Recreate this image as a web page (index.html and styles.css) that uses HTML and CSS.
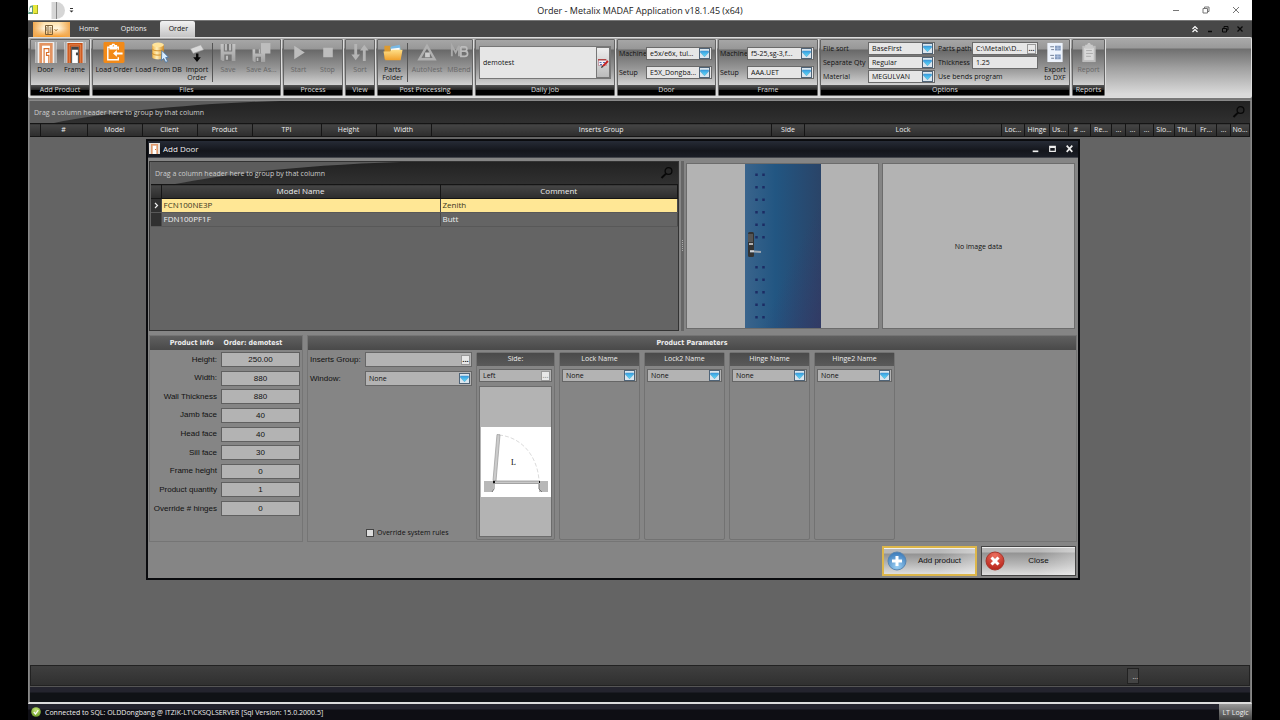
FILE: index.html
```html
<!DOCTYPE html>
<html lang="en">
<head>
<meta charset="utf-8">
<title>Order - Metalix MADAF Application v18.1.45 (x64)</title>
<link rel="stylesheet" href="styles.css">
</head>
<body>
<svg class="defs" aria-hidden="true">
  <defs>
    <linearGradient id="gCyan" x1="0" y1="0" x2="0" y2="1"><stop offset="0" stop-color="#3a9be0"/><stop offset="1" stop-color="#5fe0f8"/></linearGradient>
    <linearGradient id="gGrey" x1="0" y1="0" x2="0" y2="1"><stop offset="0" stop-color="#c4c4c4"/><stop offset="1" stop-color="#a2a2a2"/></linearGradient>
    <linearGradient id="gGold" x1="0" y1="0" x2="1" y2="0"><stop offset="0" stop-color="#f6b94a"/><stop offset=".4" stop-color="#fff0bb"/><stop offset="1" stop-color="#d58b1f"/></linearGradient>
    <linearGradient id="gFolder" x1="0" y1="0" x2="0" y2="1"><stop offset="0" stop-color="#ffe08a"/><stop offset="1" stop-color="#f0a12c"/></linearGradient>
    <linearGradient id="gDoor" x1="0" y1="0" x2="1" y2="0"><stop offset="0" stop-color="#3a648c"/><stop offset=".4" stop-color="#225682"/><stop offset="1" stop-color="#2a4468"/></linearGradient>
    <linearGradient id="gShade" x1="0" y1="0" x2="1" y2="1"><stop offset=".6" stop-color="#3a3468" stop-opacity="0"/><stop offset="1" stop-color="#3a3060" stop-opacity=".5"/></linearGradient>
    <radialGradient id="gBlue" cx=".5" cy=".8" r=".8"><stop offset="0" stop-color="#9cd0f4"/><stop offset="1" stop-color="#3878b8"/></radialGradient>
    <radialGradient id="gRed" cx=".5" cy=".2" r=".9"><stop offset="0" stop-color="#ec7060"/><stop offset="1" stop-color="#b01810"/></radialGradient>
    <radialGradient id="gGreen" cx=".5" cy=".3" r=".7"><stop offset="0" stop-color="#c8e878"/><stop offset="1" stop-color="#6c9c28"/></radialGradient>
    <symbol id="drop" viewBox="0 0 11 11"><rect width="11" height="11" fill="#4f6478"/><rect x="1" y="1" width="9" height="9" fill="#dbe6ee"/><path d="M1.500 3h8v1.600L5.500 8.800 1.500 4.600z" fill="url(#gCyan)" stroke="#3f92c8" stroke-width=".5"/></symbol>
    <symbol id="search" viewBox="0 0 14 14"><circle cx="8.500" cy="5" r="3.400" fill="none" stroke="#080808" stroke-width="1.300"/><path d="M6 7.600 1.500 12" stroke="#080808" stroke-width="2"/></symbol>
    <symbol id="floppy" viewBox="0 0 16 20"><path d="M1 2h14v16H2.500L1 16.500z" fill="url(#gGrey)"/><path d="M4 2h8v7H4zM4.500 12h7v6h-7z" fill="#777"/><path d="M5 2h2v6H5zM9 2h2v6H9zM6 13h2v4H6z" fill="#bdbdbd"/></symbol>
  </defs>
</svg>

<div class="app">
  <header class="titlebar">
    <div class="quick">
      <svg class="logo" viewBox="0 0 11 12"><path d="M2 2 6 1v9L0 10z" fill="#5d9b83"/><path d="M2 4l2-1v5H1z" fill="#fff"/><path d="M5 1h5v9H5z" fill="#e8e83c"/><path d="M9 1h1v9H6v-1h3z" fill="#a0aa28"/></svg>
      <span class="quick-tail"></span>
      <svg class="quick-arrow" viewBox="0 0 5 5"><path d="M1 0h3v1H1zM.5 2.500h4L2.500 4.500z" fill="#333"/></svg>
    </div>
    <h1>Order - Metalix MADAF Application v18.1.45 (x64)</h1>
    <div class="win-buttons">
      <button aria-label="Minimize"><svg viewBox="0 0 8 8"><path d="M1 4.500h6"/></svg></button>
      <button aria-label="Restore"><svg viewBox="0 0 8 8"><path d="M1 2.500h4.500V7H1zM2.500 2.500V1H7v4.500H5.500"/></svg></button>
      <button aria-label="Close"><svg viewBox="0 0 8 8"><path d="m1 1 6 6M7 1 1 7"/></svg></button>
    </div>
  </header>

  <nav class="tabs">
    <button class="app-button" aria-label="Application menu"><svg viewBox="0 0 15 10"><path d="M1.500.5h7v9h-7zM4 .5v9M5.500 3h2M5.500 5h2M5.500 7h2M2 3h1M2 5h1" fill="none" stroke="#7d6138"/><path d="m10.500 4 1.500 2 1.500-2" fill="none" stroke="#b88a4a"/></svg></button>
    <button class="tab">Home</button>
    <button class="tab">Options</button>
    <button class="tab active">Order</button>
    <div class="mdi">
      <svg viewBox="0 0 8 8"><path d="m1.500 4 2.500-2.500L6.500 4M1.500 7 4 4.500 6.500 7" fill="none" stroke="#fff" stroke-width="1.200"/></svg>
      <svg viewBox="0 0 8 8"><path d="M2 6.500h4" stroke="#080808" stroke-width="1.500"/></svg>
      <svg viewBox="0 0 8 8"><path d="M1.500 3.500h4V7h-4zM3 3V1.500h4V5H5.500" fill="none" stroke="#080808"/></svg>
      <svg viewBox="0 0 8 8"><path d="m1.500 1.500 5 5M6.500 1.500l-5 5" stroke="#080808" stroke-width="1.300"/></svg>
    </div>
  </nav>

  <section class="ribbon">
    <div class="group g-add">
      <div class="group-body">
        <button class="tool"><svg viewBox="0 0 22 22"><path d="M0 0h22v22H0z" fill="#eee"/><path d="M1.500 0v22M20.500 0v22" stroke="#777"/><path d="M4 1h14v21h-3V4H7v18H4z" fill="#e39462"/><path d="M7 4h8v18H7z" fill="#fff"/><path d="M9 22V7h5v4h-2.500v3H14v8" fill="none" stroke="#d9702c" stroke-width="1.200"/></svg><span>Door</span></button>
        <button class="tool"><svg viewBox="0 0 22 22"><path d="M0 0h22v22H0z" fill="#eee"/><path d="M1.500 0v22M20.500 0v22" stroke="#777"/><path d="M3 1h16v21h-4V5H7v17H3z" fill="#c95216"/><path d="M5 22V3h12v19" fill="none" stroke="#f0a070" stroke-width=".7"/><path d="M7 5h8v17H7z" fill="#444"/><path d="M8 8h6v3h-2v3h2v8H8z" fill="#fff"/></svg><span>Frame</span></button>
      </div>
      <div class="caption">Add Product</div>
    </div>
    <div class="group g-files">
      <div class="group-body">
        <button class="tool w-order"><svg viewBox="0 0 22 22"><rect width="22" height="22" rx="1.500" fill="#f28a18"/><path d="M15.500 8V5.500h-11v13h11V16M7 5V4h2l.5-1.500h1.500L11.500 4h2v3H7z" fill="none" stroke="#fff" stroke-width="1.500"/><path d="m10 12 4-3.500V11h6v2h-6v2.500z" fill="#fff"/></svg><span>Load Order</span></button>
        <button class="tool w-db"><svg viewBox="0 0 22 22"><path d="M4 3v13c0 3 12 3 12 0V3z" fill="url(#gGold)"/><ellipse cx="10" cy="3" rx="6" ry="2.400" fill="#ffe49b"/><path d="M4 7c0 3 12 3 12 0M4 11.500c0 3 12 3 12 0" fill="none" stroke="#d08e28"/><path d="m14 9 7 7-3 .3 2 4-2 1-2-4-2.500 2z" fill="#d8ecff" stroke="#3f71a4" stroke-width=".8"/></svg><span>Load From DB</span></button>
        <button class="tool w-import"><svg viewBox="0 0 22 22"><path d="m4 7 11-4 3 5-11 4z" fill="#d9d9d9" stroke="#999" stroke-width=".6"/><path d="M10 12h2.500v4h2.500l-4 5-4-5H10z" fill="#080808"/></svg><span>Import<br>Order</span></button>
        <i class="rule"></i>
        <button class="tool w-save" disabled><svg viewBox="0 0 16 20"><use href="#floppy"/></svg><span>Save</span></button>
        <button class="tool w-saveas" disabled><svg viewBox="0 0 20 20"><path d="M1 7h12v12H2.500L1 17.500z" fill="url(#gGrey)"/><path d="M3.500 7h6v4h-6zM4 14h5v5H4z" fill="#777"/><path d="M5 15h1.500v3H5zM7 7h1.500v4H7z" fill="#bbb"/><path d="M9 1h9v10H9z" fill="#bdbdbd"/></svg><span>Save As...</span></button>
      </div>
      <div class="caption">Files</div>
    </div>
    <div class="group g-process">
      <div class="group-body">
        <button class="tool" disabled><svg viewBox="0 0 22 22"><path d="m6 4 11 7-11 7z" fill="#bdbdbd"/></svg><span>Start</span></button>
        <button class="tool" disabled><svg viewBox="0 0 22 22"><path d="M6 6h10v10H6z" fill="#bdbdbd"/></svg><span>Stop</span></button>
      </div>
      <div class="caption">Process</div>
    </div>
    <div class="group g-view">
      <div class="group-body">
        <button class="tool" disabled><svg viewBox="0 0 22 22"><path d="M5 2h3v11h3l-4.500 6L2 13h3zM14 20h3V9h3l-4.500-6L11 9h3z" fill="#b5b5b5"/></svg><span>Sort</span></button>
      </div>
      <div class="caption">View</div>
    </div>
    <div class="group g-post">
      <div class="group-body">
        <button class="tool w-parts"><svg viewBox="0 0 22 22"><path d="M2 4h6l2 2h9v12H2z" fill="#dc9a30"/><path d="m8 5 10-2 2 8H9z" fill="#78b8e4"/><path d="m9 7 9-1v5H9z" fill="#fff"/><path d="M1 10h7l2-2h11l-2 11H3z" fill="url(#gFolder)"/></svg><span>Parts<br>Folder</span></button>
        <i class="rule"></i>
        <button class="tool w-nest" disabled><svg viewBox="0 0 22 22"><path d="M11 4 3 18h16z" fill="none" stroke="#b0b0b0" stroke-width="2.500"/><path d="M9 11h5v5H9z" fill="#ccc"/></svg><span>AutoNest</span></button>
        <button class="tool w-bend" disabled><svg viewBox="0 0 22 22"><path d="M3.500 15V4l4 7 3.500-7v11" fill="none" stroke="#aaa" stroke-width="2"/><path d="M13 5h4c3 0 3 4.500 0 4.500 4 0 4 5.500 0 5.500h-4V5m0 4.500h4" fill="none" stroke="#bcbcbc" stroke-width="1.800"/></svg><span>MBend</span></button>
      </div>
      <div class="caption">Post Processing</div>
    </div>
    <div class="group g-daily">
      <div class="group-body">
        <div class="job"><input aria-label="Daily job" value="demotest"><button aria-label="Edit job"><svg viewBox="0 0 12 12"><path d="M1.500 2.500h8v6h-8z" fill="#f4f0f4" stroke="#b07080" stroke-width=".6"/><path d="M1 2h8v1.500H1z" fill="#b04848"/><path d="M2.500 5.500h2M3 7.500h2M6 5.500h2" stroke="#5570b5"/><path d="m11 4-5 5" stroke="#c32020" stroke-width="1.800"/><path d="m5 8.500 1.500 1.500-2.500 1z" fill="#242424"/></svg></button></div>
      </div>
      <div class="caption">Daily Job</div>
    </div>
    <div class="group g-door">
      <div class="group-body fields two">
        <label for="dm">Machine</label><span class="combo"><select id="dm"><option>e5x/e6x, tul...</option></select><svg><use href="#drop"/></svg></span>
        <label for="ds">Setup</label><span class="combo"><select id="ds"><option>E5X_Dongba...</option></select><svg><use href="#drop"/></svg></span>
      </div>
      <div class="caption">Door</div>
    </div>
    <div class="group g-frame">
      <div class="group-body fields two">
        <label for="fm">Machine</label><span class="combo"><select id="fm"><option>f5-25,sg-3,f...</option></select><svg><use href="#drop"/></svg></span>
        <label for="fs">Setup</label><span class="combo"><select id="fs"><option>AAA.UET</option></select><svg><use href="#drop"/></svg></span>
      </div>
      <div class="caption">Frame</div>
    </div>
    <div class="group g-options">
      <div class="group-body opts">
        <div class="fields three">
          <label for="sort">File sort</label><span class="combo"><select id="sort"><option>BaseFirst</option></select><svg><use href="#drop"/></svg></span>
          <label for="sep">Separate Qty</label><span class="combo"><select id="sep"><option>Regular</option></select><svg><use href="#drop"/></svg></span>
          <label for="mat">Material</label><span class="combo"><select id="mat"><option>MEGULVAN</option></select><svg><use href="#drop"/></svg></span>
        </div>
        <div class="fields three paths">
          <label for="path">Parts path</label><span class="combo"><input id="path" value="C:\Metalix\D..."><button class="dots" aria-label="Browse">...</button></span>
          <label for="thick">Thickness</label><span class="combo"><input id="thick" value="1.25"></span>
          <span class="wide">Use bends program</span>
        </div>
        <button class="tool w-dxf"><svg viewBox="0 0 22 22"><path d="M3 1h16v20H3z" fill="#edf3fc"/><path d="M6 5h4M7 8h3M6 14h4M7 17h3" stroke="#6d7a90"/><path d="M11 4h6v5h-6zM11 13h6v5h-6z" fill="#8299bd"/><path d="M11 6.500h6M11 15.500h6M14 4v5M14 13v5" stroke="#c3d2ea" stroke-width=".6"/></svg><span>Export<br>to DXF</span></button>
      </div>
      <div class="caption">Options</div>
    </div>
    <div class="group g-reports">
      <div class="group-body">
        <button class="tool" disabled><svg viewBox="0 0 22 22"><path d="M4 4h14v17H4z" fill="#bdbdbd"/><path d="M6 6h10v13H6z" fill="#d9d9d9"/><path d="M7 3h2l1-2h2l1 2h2v4H7z" fill="#c9c9c9"/><path d="M8 9h6M8 12h7M8 15h5" stroke="#aaa"/></svg><span>Report</span></button>
      </div>
      <div class="caption">Reports</div>
    </div>
  </section>

  <main class="workspace">
    <div class="group-panel">
      <svg class="sweep" viewBox="0 0 250 24" preserveAspectRatio="none"><path d="M0 0h250C160 3 80 12 24 24H0z" fill="#5c5c5c"/></svg>
      <span>Drag a column header here to group by that column</span><svg class="search"><use href="#search"/></svg>
    </div>
    <table class="columns">
      <colgroup><col class="c10"><col class="c47"><col class="c55"><col class="c55"><col class="c55"><col class="c69"><col class="c55"><col class="c55"><col><col class="c33"><col class="c197"><col class="c23"><col class="c25"><col class="c19"><col class="c22"><col class="c21"><col class="c14"><col class="c14"><col class="c14"><col class="c21"><col class="c21"><col class="c21"><col class="c14"><col class="c19"></colgroup>
      <thead><tr><th></th><th>#</th><th>Model</th><th>Client</th><th>Product</th><th>TPI</th><th>Height</th><th>Width</th><th>Inserts Group</th><th>Side</th><th>Lock</th><th>Loc...</th><th>Hinge</th><th>Us...</th><th># ...</th><th>Re...</th><th>...</th><th>...</th><th>...</th><th>Slo...</th><th>Thi...</th><th>Fr...</th><th>...</th><th>No...</th></tr></thead>
    </table>
    <div class="grid-space"></div>
    <div class="grid-footer"><span>...</span></div>
    <div class="dock"></div>
  </main>

  <footer class="status">
    <svg viewBox="0 0 10 10"><circle cx="5" cy="5" r="4.800" fill="url(#gGreen)"/><path d="m2.800 5 1.700 2 2.800-3.800" fill="none" stroke="#fff" stroke-width="1.200"/></svg>
    <span>Connected to SQL: OLDDongbang @ ITZIK-LT\CKSQLSERVER [Sql Version: 15.0.2000.5]</span>
    <strong>LT Logic</strong>
  </footer>

  <section class="dialog" role="dialog" aria-labelledby="dlg">
    <div class="dialog-title">
      <svg viewBox="0 0 11 11"><path d="M0 0h11v11H0z" fill="#e5e0da"/><path d="M2 1h7v10H7.500V2.500h-4V11H2z" fill="#e39a6c"/><path d="M4 3h3v8H4z" fill="#fff"/><path d="M6 6h1v1H6z" fill="#d3783c"/></svg>
      <h2 id="dlg">Add Door</h2>
      <button aria-label="Minimize"><svg viewBox="0 0 8 8"><path d="M1.500 6.500h5" stroke="#eee" stroke-width="1.500"/></svg></button>
      <button aria-label="Maximize"><svg viewBox="0 0 8 8"><path d="M1.500 2h5v4.500h-5zM1.500 3h5" fill="none" stroke="#eee"/></svg></button>
      <button aria-label="Close"><svg viewBox="0 0 8 8"><path d="m1.500 1.500 5 5.500M6.500 1.500l-5 5.500" stroke="#eee" stroke-width="1.500"/></svg></button>
    </div>
    <div class="dialog-body">
      <div class="upper">
        <div class="models">
          <div class="group-panel">
            <svg class="sweep" viewBox="0 0 250 24" preserveAspectRatio="none"><path d="M0 0h250C160 3 80 12 24 24H0z" fill="#5c5c5c"/></svg>
            <span>Drag a column header here to group by that column</span><svg class="search"><use href="#search"/></svg>
          </div>
          <table>
            <colgroup><col class="c10"><col class="c279"><col></colgroup>
            <thead><tr><th></th><th>Model Name</th><th>Comment</th></tr></thead>
            <tbody>
              <tr class="picked"><td class="mark"><svg viewBox="0 0 5 7"><path d="m1 1 2.500 2.500L1 6" fill="none" stroke="#eee" stroke-width="1.200"/></svg></td><td>FCN100NE3P</td><td>Zenith</td></tr>
              <tr><td class="mark"></td><td>FDN100PF1F</td><td>Butt</td></tr>
            </tbody>
          </table>
        </div>
        <div class="splitter"><svg viewBox="0 0 3 12"><path d="M1.500 0v12" stroke="#aaa" stroke-dasharray="1 1"/></svg></div>
        <div class="picture">
          <svg class="door" viewBox="0 0 76 164" preserveAspectRatio="none">
            <path d="M0 0h76v164H0z" fill="url(#gDoor)"/><path d="M0 0h76v164H0z" fill="url(#gShade)"/>
            <path d="M11.500 9.500v66M18.500 9.500v66M11.500 102v60M18.500 102v60" stroke="#1c2c64" stroke-width="2.500" stroke-dasharray="2.500 10"/>
            <rect x="3" y="68" width="6" height="25" rx="1.500" fill="#333"/><path d="M3 70h5v8H3z" fill="#555"/><path d="M4 80h4" stroke="#ddd" stroke-width="1.500"/><path d="M5 87.500h4l7 .5" stroke="#9aa6b2" stroke-width="2" fill="none"/><path d="M5 87h4" stroke="#fff"/>
          </svg>
        </div>
        <div class="picture">No image data</div>
      </div>

      <div class="lower">
        <section class="panel info">
          <h3><span>Product Info</span><span>Order: demotest</span></h3>
          <div class="info-grid">
            <label for="i1">Height:</label><input id="i1" value="250.00">
            <label for="i2">Width:</label><input id="i2" value="880">
            <label for="i3">Wall Thickness</label><input id="i3" value="880">
            <label for="i4">Jamb face</label><input id="i4" value="40">
            <label for="i5">Head face</label><input id="i5" value="40">
            <label for="i6">Sill face</label><input id="i6" value="30">
            <label for="i7">Frame height</label><input id="i7" value="0">
            <label for="i8">Product quantity</label><input id="i8" value="1">
            <label for="i9">Override # hinges</label><input id="i9" value="0">
          </div>
        </section>
        <section class="panel params">
          <h3>Product Parameters</h3>
          <div class="param-row">
            <div class="inserts">
              <div class="inserts-grid">
                <label for="ig">Inserts Group:</label><span class="combo"><input id="ig"><button class="dots" aria-label="Browse">...</button></span>
                <label for="wn">Window:</label><span class="combo"><select id="wn"><option>None</option></select><svg><use href="#drop"/></svg></span>
              </div>
              <label class="override"><input type="checkbox">Override system rules</label>
            </div>
            <div class="box side">
              <h4>Side:</h4>
              <span class="combo"><input aria-label="Side" value="Left"><button class="dots faded" aria-label="Browse">...</button></span>
              <div class="swing">
                <svg viewBox="0 0 70 70"><path d="M0 0h70v70H0z" fill="#fff"/><path d="M18 8C40 10 56 28 58 53" fill="none" stroke="#ccc" stroke-width=".7" stroke-dasharray="4 2"/><path d="m16 7.500 3 .3L15 54l-3-.5z" fill="#ccc" stroke="#999" stroke-width=".7"/><path d="M12 54h47v2.500H12z" fill="#c8c8c8" stroke="#777" stroke-width=".6"/><path d="M3 54h9v11H3zM58 54h9v11h-9z" fill="#b8b8b8"/><path d="M13 56v6l-2 3M58 57v5l3 3" stroke="#777" fill="none"/><path d="M12 54h2v2h-2zM58 54h1v2h-1z" fill="#111"/><text x="30" y="38">L</text></svg>
              </div>
            </div>
            <div class="box"><h4>Lock Name</h4><span class="combo"><select aria-label="Lock name"><option>None</option></select><svg><use href="#drop"/></svg></span></div>
            <div class="box"><h4>Lock2 Name</h4><span class="combo"><select aria-label="Lock2 name"><option>None</option></select><svg><use href="#drop"/></svg></span></div>
            <div class="box"><h4>Hinge Name</h4><span class="combo"><select aria-label="Hinge name"><option>None</option></select><svg><use href="#drop"/></svg></span></div>
            <div class="box"><h4>Hinge2 Name</h4><span class="combo"><select aria-label="Hinge2 name"><option>None</option></select><svg><use href="#drop"/></svg></span></div>
          </div>
        </section>
      </div>

      <div class="actions">
        <button class="action primary"><svg viewBox="0 0 20 20"><circle cx="10" cy="10" r="9" fill="url(#gBlue)" stroke="#5a86b0"/><path d="M10 5v10M5 10h10" stroke="#fff" stroke-width="3"/></svg><span>Add product</span></button>
        <button class="action"><svg viewBox="0 0 20 20"><circle cx="10" cy="10" r="9" fill="url(#gRed)" stroke="#a8362c"/><path d="m6.500 6.500 7 7M13.500 6.500l-7 7" stroke="#fff" stroke-width="3"/></svg><span>Close</span></button>
      </div>
    </div>
  </section>
</div>
</body>
</html>
```
FILE: styles.css
```css
* { box-sizing: border-box; }
html, body { height: 100%; }
body {
  margin: 0;
  padding: 0 28px;
  background: #000;
  font: 7px/9px "Open Sans", "Noto Sans", sans-serif;
  color: #111;
}
.defs { position: absolute; width: 0; height: 0; }
h1, h2, h3, h4 { margin: 0; font-weight: 400; font-size: inherit; }
svg { display: block; flex: none; }
button, input, select { font: inherit; color: inherit; margin: 0; padding: 0; border: 0; background: none; border-radius: 0; }
input, select { min-width: 0; appearance: none; outline: none; }
table { border-collapse: collapse; table-layout: fixed; width: 100%; }

.app { position: relative; display: flex; flex-direction: column; height: 100vh; min-height: 700px; background: #777; }

/* window title */
.titlebar { display: grid; grid-template-columns: 1fr auto 1fr; align-items: center; height: 20px; background: #fff; }
.titlebar h1 { font-size: 9px; line-height: 12px; color: #222; padding-top: 1px; }
.quick { display: flex; align-items: center; }
.logo { width: 11px; height: 12px; }
.quick-tail { width: 20px; height: 17px; margin-left: 6px; border-radius: 0 10px 10px 0; background: linear-gradient(90deg, #fff 0 6px, #d6d6d6 7px 11px, #888 11px 12px, #d6d6d6 12px); }
.quick-arrow { width: 5px; height: 5px; margin-left: 4px; }
.win-buttons { display: flex; justify-content: flex-end; gap: 22px; padding-right: 12px; }
.win-buttons svg { width: 8px; height: 8px; fill: none; stroke: #777; stroke-width: 1; }

/* ribbon tabs */
.tabs { display: flex; align-items: flex-end; height: 17px; padding-left: 5px; border-top: 1px solid #777; background: #474747; color: #eee; }
.app-button { display: flex; justify-content: center; align-items: center; width: 37px; height: 15px; background: linear-gradient(90deg, #f0a850, transparent 30% 70%, #f0a850), linear-gradient(#ffe0a8, #fff6e0 45%, #f79a28); }
.app-button svg { width: 15px; height: 10px; }
.tab { height: 16px; padding: 0 9px 1px; }
.tab + .tab { margin-left: 4px; }
.tab.active { width: 35px; border-radius: 2px 2px 0 0; background: linear-gradient(#f2f2f2, #c4c4c4); color: #111; }
.mdi { display: flex; gap: 7px; margin-left: auto; padding: 0 8px 4px 0; }
.mdi svg { width: 8px; height: 8px; }

/* ribbon */
.ribbon { display: flex; gap: 2px; height: 61px; padding: 1px 2px; border: 1px solid #ddd; border-left: 0; border-radius: 2px; background: linear-gradient(#aaa 0, #999 10px, #6f6f6f 11px, #a0a0a0 30px, #dadada 56px); }
.group { display: flex; flex-direction: column; flex: none; border: 1px solid #656565; box-shadow: 1px 0 #ddd; border-radius: 1px; background: linear-gradient(#a6a6a6 0, #979797 9px, #686868 10px, #989898 29px, #d9d9d9 47px); }
.group-body { display: flex; flex: 1; min-height: 0; justify-content: space-around; align-items: stretch; }
.caption { height: 10px; line-height: 10px; text-align: center; color: #ddd; white-space: nowrap; background: linear-gradient(#555, #222 50%, #000 51%); }
.g-add { width: 60px; }
.g-files { width: 189px; }
.g-process { width: 60px; }
.g-view { width: 30px; }
.g-post { width: 96px; }
.g-daily { width: 140px; }
.g-door { width: 99px; }
.g-frame { width: 100px; }
.g-options { width: 250px; }
.g-reports { width: 33px; }
.tool { display: flex; flex-direction: column; align-items: center; gap: 3px; flex: 1; min-width: 0; padding-top: 2px; white-space: nowrap; }
.tool svg { width: 22px; height: 21px; }
.tool span { line-height: 8px; }
.tool:disabled { color: #686868; }
.tool.w-order { flex: none; width: 42px; }
.tool.w-db { flex: none; width: 47px; }
.tool.w-import { flex: none; width: 30px; }
.tool.w-save { flex: none; width: 30px; }
.tool.w-parts { flex: none; width: 29px; }
.tool.w-nest { flex: none; width: 38px; }
.rule { width: 1px; margin: 3px 0; background: #555; }
.job { display: flex; flex: 1; margin: 6px 3px; border: 1px solid #777; background: #e6e6e6; }
.job input { flex: 1; padding-left: 3px; }
.job button { display: flex; align-items: center; width: 14px; border: 1px solid #777; background: linear-gradient(#eee, #bbb); }
.job svg { width: 12px; height: 12px; }

.combo { display: flex; align-items: center; min-width: 0; height: 13px; padding: 0 1px 0 3px; border: 1px solid #6a6a6a; background: #e6e6e6; }
.combo input, .combo select { flex: 1; width: 0; line-height: 9px; height: 11px; }
.combo svg { width: 11px; height: 11px; }
.dots { width: 9px; height: 10px; line-height: 4px; border: 1px solid #999; background: #e8e8e8; color: #111; font-weight: 700; }
.faded { color: #999; }
.fields { display: grid; align-content: center; align-items: center; justify-content: stretch; white-space: nowrap; }
.two { grid-template-columns: 27px 1fr; row-gap: 6px; padding: 0 3px 0 1px; }
.three { grid-template-columns: 45px 67px; row-gap: 1px; padding-left: 2px; align-content: start; padding-top: 2px; }
.paths { grid-template-columns: 34px 66px; padding-left: 0; }
.paths .wide { grid-column: 1 / -1; line-height: 13px; }
.opts { gap: 3px; }

/* order grid */
.workspace { display: flex; flex-direction: column; flex: 1; min-height: 0; margin-top: 2px; padding: 0 1px; border: 1px solid #888; border-bottom: 2px solid #ddd; background: #777; }
.group-panel { position: relative; display: flex; align-items: center; justify-content: space-between; height: 22px; padding: 0 4px; background: linear-gradient(#222, #303030); color: #ccc; }
.group-panel > span { position: relative; }
.sweep { position: absolute; left: 0; top: 0; width: 250px; height: 100%; }
.search { width: 14px; height: 14px; }
th { height: 13px; padding: 0; overflow: hidden; border: 1px solid #151515; border-width: 1px 1px 1px 0; background: linear-gradient(#454545, #2c2c2c); color: #eee; font-weight: 400; line-height: 9px; white-space: nowrap; }
.columns th { padding-bottom: 1px; }
.c10 { width: 10px; }
.c14 { width: 14px; }
.c19 { width: 19px; }
.c21 { width: 21px; }
.c22 { width: 22px; }
.c23 { width: 23px; }
.c25 { width: 25px; }
.c33 { width: 33px; }
.c47 { width: 47px; }
.c55 { width: 55px; }
.c69 { width: 69px; }
.c197 { width: 197px; }
.c279 { width: 279px; }
.grid-space { flex: 1; background: #646464; }
.grid-footer { display: flex; justify-content: flex-end; align-items: center; height: 21px; padding-right: 110px; border: 1px solid #222; background: linear-gradient(#3f3f3f, #303030); color: #ddd; }
.grid-footer span { width: 12px; height: 16px; line-height: 16px; text-align: right; border: 1px solid #222; background: #444; }
.dock { height: 16px; border-top: 1px solid #555; background: linear-gradient(#24242e 0 5px, #101216 6px); }
.status { display: flex; align-items: center; gap: 4px; height: 16px; padding-left: 3px; background: linear-gradient(#24242e 0 5px, #0e0e14 6px); color: #eee; }
.status svg { width: 10px; height: 10px; }
.status strong { display: flex; align-items: center; justify-content: center; align-self: stretch; width: 33px; margin-left: auto; font-weight: 400; background: linear-gradient(#999, #444); }

/* add door window */
.dialog { position: absolute; left: 118px; right: 172px; top: 139px; border: 2px solid #0a0b0e; background: #858585; color: #111; }
.dialog-title { display: flex; align-items: center; gap: 8px; height: 17px; padding: 0 4px 1px 1px; border-bottom: 1px solid #44464c; background: linear-gradient(#262b36, #14161c 60%, #1b1e26); color: #eee; }
.dialog-title > svg { width: 11px; height: 11px; }
.dialog-title h2 { flex: 1; margin-left: -5px; font-size: 8px; line-height: 11px; }
.dialog-title button svg { width: 9px; height: 9px; }
.dialog-body { padding: 3px 1px 2px; }
.upper { display: flex; gap: 2px; height: 170px; }
.models { width: 530px; padding-left: 1px; border: 1px solid #333; background: #646464; }
.models table { font-size: 8px; line-height: 10px; }
.models th { height: 14px; line-height: 10px; padding-bottom: 1px; }
.models td { height: 14px; padding: 0 2px 1px; border-right: 1px solid #4a4a4a; border-bottom: 1px solid #585858; color: #eee; }
.models .mark { padding: 0 3px; background: #303030; }
.mark svg { width: 5px; height: 7px; }
.models .picked td:not(.mark) { background: #ffe795; color: #3a3620; }
.splitter { display: flex; align-items: center; width: 3px; background: #666; }
.splitter svg { width: 3px; height: 12px; }
.picture { display: flex; flex: 1; justify-content: center; align-items: center; margin: 2px 0; border: 1px solid #6c6c6c; background: #b3b3b3; }
.picture + .picture { margin: 2px 2px 2px 1px; }
.door { width: 76px; height: 164px; }
.lower { display: flex; gap: 4px; margin-top: 4px; height: 207px; }
.panel { border: 1px solid #757575; }
.panel h3 { display: flex; justify-content: center; gap: 10px; height: 14px; font: 700 7px/14px "DejaVu Sans Condensed", "DejaVu Sans", sans-serif; color: #eee; background: linear-gradient(#606060, #494949); }
.info { width: 154px; font: 8px/10px "Liberation Sans", Arial, sans-serif; }
.info-grid { display: grid; grid-template-columns: 1fr 79px; column-gap: 4px; height: 168px; padding: 2px; align-items: center; align-content: space-between; text-align: right; white-space: nowrap; }
.info-grid label { margin-left: -3px; }
.info-grid input { height: 15px; text-align: center; border: 1px solid #606060; background: #b3b3b3; }
.params { flex: 1; }
.param-row { display: flex; gap: 4px; height: 190px; padding: 2px 2px 0; }
.param-row .combo { background: #b3b3b3; border-color: #666; }
.inserts { display: flex; flex-direction: column; justify-content: space-between; width: 162px; }
.inserts-grid { display: grid; grid-template-columns: 55px 107px; row-gap: 4px; align-items: center; font-family: "Liberation Sans", Arial, sans-serif; font-size: 8px; white-space: nowrap; }
.inserts-grid .combo { height: 15px; }
.inserts-grid select { font: 7px/9px "Open Sans", sans-serif; }
.override { display: flex; align-items: center; gap: 3px; margin: 0 0 3px 56px; }
.override input { width: 8px; height: 8px; border: 1px solid #444; background: #ddd; }
.box { width: 81px; border: 1px solid #727272; border-radius: 2px; }
.box h4 { height: 13px; line-height: 12px; text-align: center; color: #eee; background: linear-gradient(#4a4a4a, #5a5a5a); }
.box .combo { margin: 3px 2px; }
.side { display: flex; flex-direction: column; width: 79px; }
.swing { display: flex; flex: 1; align-items: center; justify-content: center; margin: 1px 2px 2px; border: 1px solid #6c6c6c; background: #b3b3b3; }
.swing svg { width: 70px; height: 70px; }
.swing text { font: 8px "Liberation Serif", serif; }
.actions { display: flex; justify-content: flex-end; gap: 4px; padding: 4px 1px 0; }
.action { display: flex; align-items: center; width: 95px; height: 30px; padding: 0 3px; border: 1px solid #444; box-shadow: inset 0 1px #eee; background: linear-gradient(90deg, transparent 60%, #ffffff55), linear-gradient(#b8b8b8 0 5px, #939393 6px, #b5b5b5 60%, #dedede); font: 8px/10px "Liberation Sans", Arial, sans-serif; }
.action svg { width: 20px; height: 20px; }
.action span { flex: 1; text-align: center; }
.primary { border: 2px solid #dcb64a; }
```
